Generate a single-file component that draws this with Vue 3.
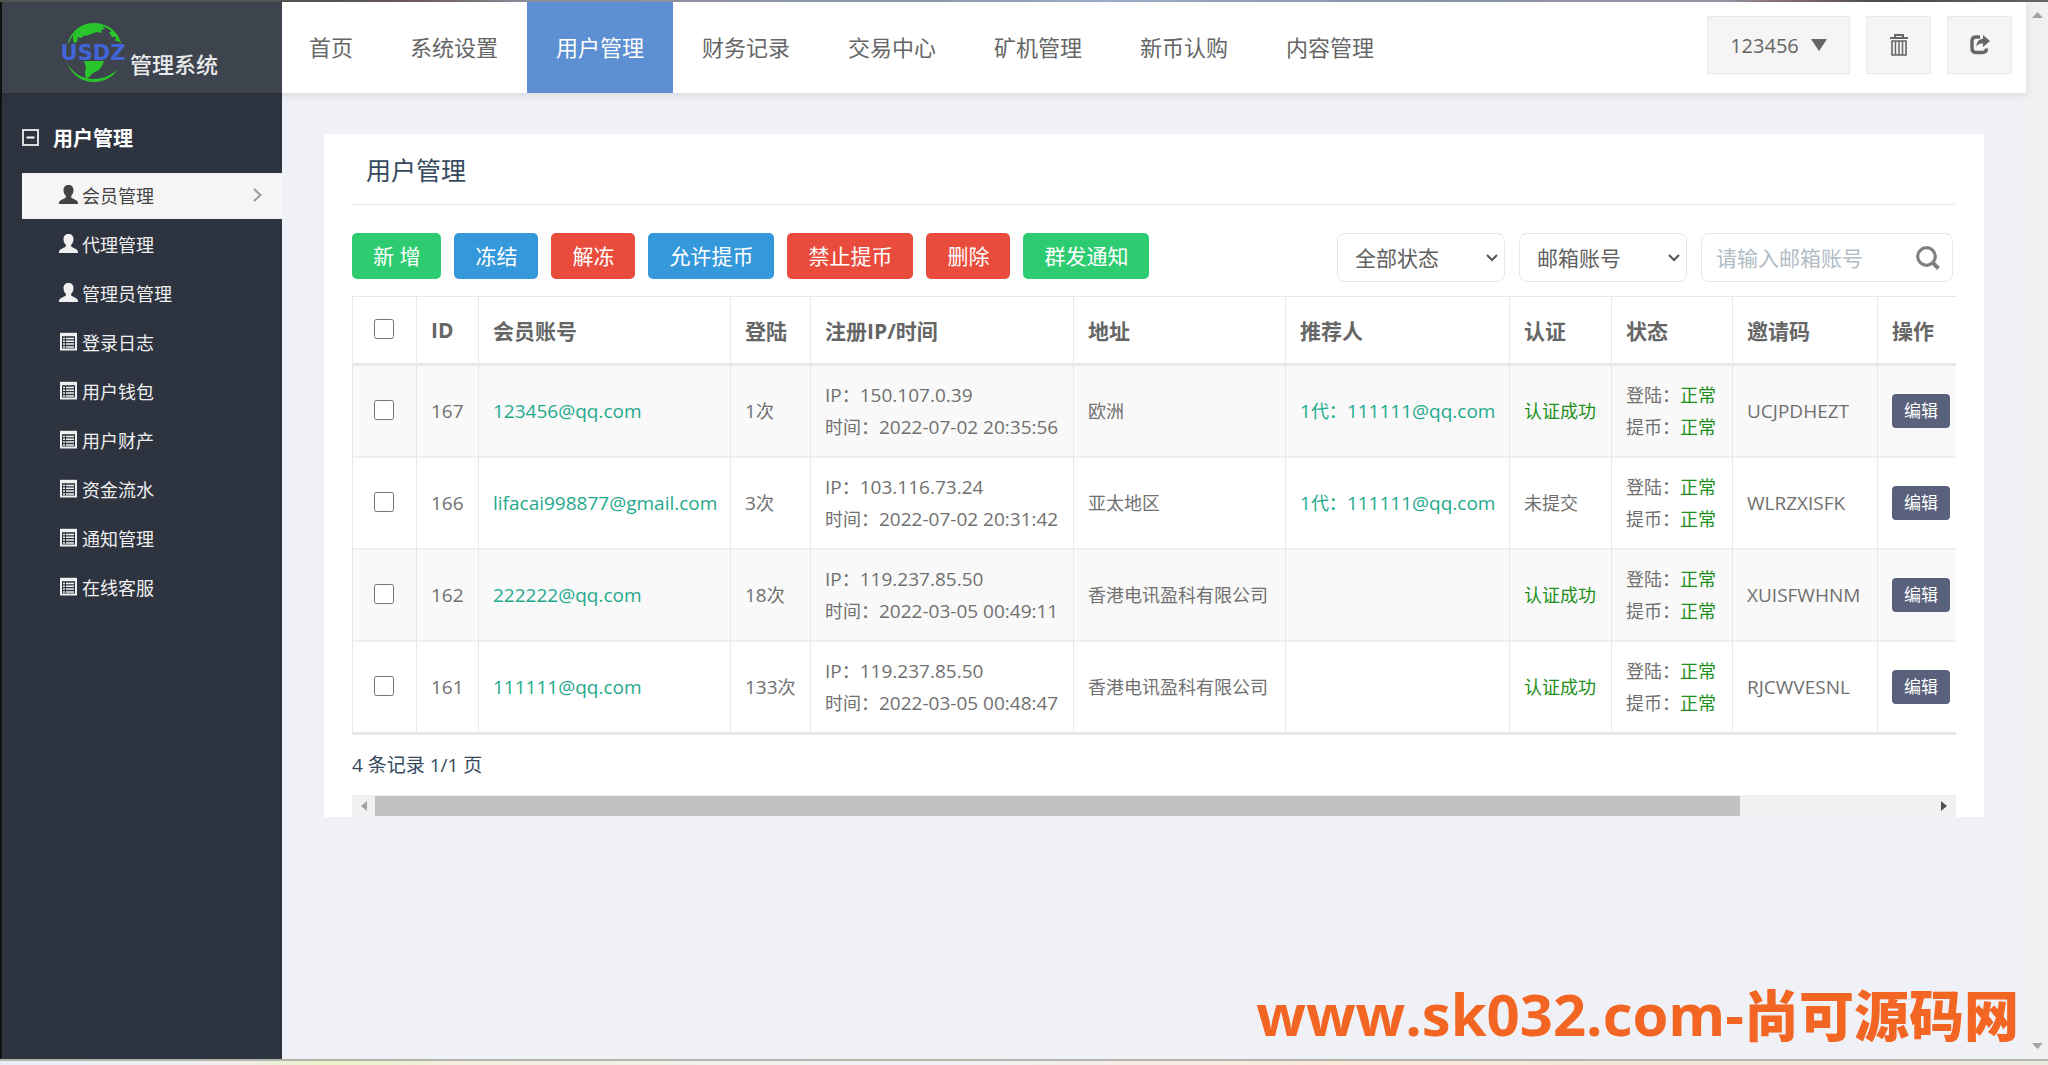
<script setup>
import { ref } from 'vue'

const topNav = ['首页', '系统设置', '用户管理', '财务记录', '交易中心', '矿机管理', '新币认购', '内容管理']
const activeTop = ref('用户管理')

const sideNav = [
  { label: '会员管理', icon: 'user' },
  { label: '代理管理', icon: 'user' },
  { label: '管理员管理', icon: 'user' },
  { label: '登录日志', icon: 'list' },
  { label: '用户钱包', icon: 'list' },
  { label: '用户财产', icon: 'list' },
  { label: '资金流水', icon: 'list' },
  { label: '通知管理', icon: 'list' },
  { label: '在线客服', icon: 'list' },
]
const activeSide = ref('会员管理')

const actions = [
  { label: '新 增', tone: 'green' },
  { label: '冻结', tone: 'blue' },
  { label: '解冻', tone: 'red' },
  { label: '允许提币', tone: 'blue' },
  { label: '禁止提币', tone: 'red' },
  { label: '删除', tone: 'red' },
  { label: '群发通知', tone: 'green' },
]

const columns = ['ID', '会员账号', '登陆', '注册IP/时间', '地址', '推荐人', '认证', '状态', '邀请码', '操作']

const members = [
  { id: 167, account: '123456@qq.com', logins: 1, ip: '150.107.0.39', time: '2022-07-02 20:35:56', place: '欧洲', referrer: '111111@qq.com', verified: true, code: 'UCJPDHEZT' },
  { id: 166, account: 'lifacai998877@gmail.com', logins: 3, ip: '103.116.73.24', time: '2022-07-02 20:31:42', place: '亚太地区', referrer: '111111@qq.com', verified: false, code: 'WLRZXISFK' },
  { id: 162, account: '222222@qq.com', logins: 18, ip: '119.237.85.50', time: '2022-03-05 00:49:11', place: '香港电讯盈科有限公司', referrer: '', verified: true, code: 'XUISFWHNM' },
  { id: 161, account: '111111@qq.com', logins: 133, ip: '119.237.85.50', time: '2022-03-05 00:48:47', place: '香港电讯盈科有限公司', referrer: '', verified: true, code: 'RJCWVESNL' },
]

const keyword = ref('')
</script>

<template>
  <div class="screen">
    <div class="edge-top"></div>
    <div class="app">
      <div class="shell">
        <header class="topbar">
          <div class="brand">
            <svg class="globe" viewBox="0 0 66 62" width="66" height="62" aria-label="USDZ">
              <g fill="#2ac52a">
                <path d="M7 22C10 10 20 2 33 2s24 8 27 20l-1 0C55 11 45 4 33 4S12 11 8 22z" />
                <path d="M12 15l5-7 9-4 9-1 6 2 3 3-4 1 1 3-5-1-6 2-4 2-2-1-4 3-3-1-1 5-3 1-1-4z" />
                <path d="M50 8l6 6 3 7-3-1-2 0 1-4-4 0-3-5 2 0z" />
                <path d="M23 40h20l-2 5-3 4-6 3-4 4-3 2-1-7 1-5z" />
                <path d="M7 43c5 9 14 15 26 15 9 0 18-4 24-10-5 8-14 13-24 13C20 61 10 53 7 43z" />
              </g>
              <text x="32" y="39" text-anchor="middle" fill="#4164d8">USDZ</text>
            </svg>
            <span class="brand-name">管理系统</span>
          </div>
          <nav class="topnav">
            <a v-for="item in topNav" :key="item" href="#" :class="{ active: item === activeTop }" @click.prevent="activeTop = item">{{ item }}</a>
          </nav>
          <div class="tools">
            <button type="button" class="account">123456
              <svg width="16" height="12" viewBox="0 0 16 12"><path d="M0 0h16L8 12z" fill="#666" /></svg>
            </button>
            <button type="button" class="square" aria-label="清除缓存">
              <svg width="18" height="22" viewBox="0 0 18 22" fill="none" stroke="#666" stroke-width="2">
                <path d="M0 4h18M5 4V1h8v3" />
                <path d="M2 7h14v14H2z" stroke-width="1.6" />
                <path d="M5.500 7v14M9 7v14M12.500 7v14" stroke-width="1.500" />
              </svg>
            </button>
            <button type="button" class="square" aria-label="退出">
              <svg width="20" height="20" viewBox="0 0 20 20">
                <path d="M10 2H6C3 2 2 3.500 2 6v7c0 3 1 4.500 4 4.500h6c3 0 4.500-1 4.500-4" fill="none" stroke="#666" stroke-width="3.400" />
                <path d="M13 0l7 6-7 6V8.500c-3 0-5 .5-6.500 3C6.500 6.500 9 4 13 3.700z" fill="#666" />
              </svg>
            </button>
          </div>
        </header>

        <div class="body">
          <aside class="sidebar">
            <div class="group">
              <svg width="17" height="17" viewBox="0 0 17 17"><rect x="1" y="1" width="15" height="15" fill="none" stroke="#dcdde0" stroke-width="2" /><path d="M4.500 8.500h8" stroke="#fff" stroke-width="2" /></svg>
              <span>用户管理</span>
            </div>
            <nav class="sidenav">
              <a v-for="item in sideNav" :key="item.label" href="#" :class="{ active: item.label === activeSide }" @click.prevent="activeSide = item.label">
                <svg v-if="item.icon === 'user'" width="19" height="19" viewBox="0 0 19 19"><path d="M9.500 0C6.500 0 4.500 2 4.500 5c0 2.500 1 4.600 2.300 5.800v1.700C5.500 14 0 15 0 18v1h19v-1c0-3-5.500-4-6.800-5.500v-1.700c1.300-1.200 2.300-3.300 2.300-5.800 0-3-2-5-5-5z" fill="currentColor" /></svg>
                <svg v-else width="19" height="19" viewBox="0 0 19 19" fill="none" stroke="currentColor">
                  <path d="M2 2h15v15.500H2z" stroke-width="2" /><path d="M1 2.500h17" stroke-width="3.400" />
                  <path d="M4 6.500h2M7 6.500h8M4 9.300h2M7 9.300h8M4 12.100h2M7 12.100h8M4 14.900h2M7 14.900h8" stroke-width="1.500" />
                </svg>
                <span>{{ item.label }}</span>
                <svg v-if="item.label === activeSide" width="9" height="14" viewBox="0 0 9 14"><path d="M1 1l6.500 6L1 13" fill="none" stroke="#999" stroke-width="2" /></svg>
              </a>
            </nav>
          </aside>

          <main class="main">
            <section class="card">
              <h1>用户管理</h1>
              <div class="toolbar">
                <div class="actions">
                  <button v-for="a in actions" :key="a.label" type="button" :class="a.tone">{{ a.label }}</button>
                </div>
                <form class="filters" @submit.prevent>
                  <label class="pick">
                    <select aria-label="状态"><option>全部状态</option></select>
                    <svg width="12" height="8" viewBox="0 0 12 8"><path d="M1 1l5 5 5-5" fill="none" stroke="#555" stroke-width="2" /></svg>
                  </label>
                  <label class="pick">
                    <select aria-label="查询方式"><option>邮箱账号</option></select>
                    <svg width="12" height="8" viewBox="0 0 12 8"><path d="M1 1l5 5 5-5" fill="none" stroke="#555" stroke-width="2" /></svg>
                  </label>
                  <div class="search">
                    <input v-model="keyword" type="text" placeholder="请输入邮箱账号" aria-label="邮箱账号">
                    <button type="submit" aria-label="搜索">
                      <svg width="24" height="24" viewBox="0 0 24 24" fill="none" stroke="#808080"><circle cx="10.500" cy="10.500" r="8.800" stroke-width="3.200" /><path d="M16.500 16.500l6 6" stroke-width="4" /></svg>
                    </button>
                  </div>
                </form>
              </div>

              <div class="table-wrap">
                <table>
                  <colgroup>
                    <col class="c-check"><col class="c-id"><col class="c-account"><col class="c-login"><col class="c-ip"><col class="c-place"><col class="c-ref"><col class="c-auth"><col class="c-state"><col class="c-code"><col class="c-op">
                  </colgroup>
                  <thead>
                    <tr>
                      <th class="check"><input type="checkbox" aria-label="全选"></th>
                      <th v-for="c in columns" :key="c">{{ c }}</th>
                    </tr>
                  </thead>
                  <tbody>
                    <tr v-for="m in members" :key="m.id">
                      <td class="check"><input type="checkbox" :aria-label="'选择 ' + m.id"></td>
                      <td><span class="latin">{{ m.id }}</span></td>
                      <td><a href="#" class="latin" @click.prevent>{{ m.account }}</a></td>
                      <td><span class="latin">{{ m.logins }}</span>次</td>
                      <td>
                        <div><span class="latin">IP</span>：<span class="latin">{{ m.ip }}</span></div>
                        <div>时间：<span class="latin">{{ m.time }}</span></div>
                      </td>
                      <td>{{ m.place }}</td>
                      <td><a v-if="m.referrer" href="#" @click.prevent><span class="latin">1</span>代：<span class="latin">{{ m.referrer }}</span></a></td>
                      <td><span :class="{ ok: m.verified }">{{ m.verified ? '认证成功' : '未提交' }}</span></td>
                      <td>
                        <div>登陆：<span class="ok">正常</span></div>
                        <div>提币：<span class="ok">正常</span></div>
                      </td>
                      <td><span class="latin">{{ m.code }}</span></td>
                      <td><button type="button" class="edit">编辑</button></td>
                    </tr>
                  </tbody>
                </table>
              </div>
              <p class="pager">4 条记录 1/1 页</p>
              <div class="hbar">
                <svg width="6" height="10" viewBox="0 0 6 10"><path d="M6 0v10L0 5z" fill="#a3a3a3" /></svg>
                <div class="htrack"><div class="hthumb"></div></div>
                <svg width="6" height="10" viewBox="0 0 6 10"><path d="M0 0v10l6-5z" fill="#505050" /></svg>
              </div>
            </section>
          </main>
        </div>
      </div>
      <div class="vbar">
        <svg width="11" height="6" viewBox="0 0 11 6"><path d="M0 6h11L5.500 0z" fill="#a3a3a3" /></svg>
        <svg width="11" height="6" viewBox="0 0 11 6"><path d="M0 0h11L5.500 6z" fill="#a3a3a3" /></svg>
      </div>
      <div class="watermark"><span>www.sk032.com-</span>尚可源码网</div>
    </div>
    <div class="edge-bottom"></div>
  </div>
</template>

<style>
body {
  margin: 0;
  background: #f0f1f7;
}
</style>

<style scoped>
.screen {
  display: flex;
  flex-direction: column;
  height: 100vh;
  box-sizing: border-box;
  font-family: "Open Sans", "Noto Sans CJK SC", sans-serif;
  font-size: 18px;
  color: #707070;
}
.screen * {
  box-sizing: border-box;
}
button, input, select {
  font-family: inherit;
  margin: 0;
}
a {
  text-decoration: none;
}
svg {
  display: block;
  flex: none;
}
.edge-top {
  height: 2px;
  flex: none;
  background: linear-gradient(90deg, #555 0, #555 16%, #6f5a5e 20%, #8f92a0 26%, #8f9ab0 45%, #a3b0cc 54%, #8a94aa 70%, #9a9aa8 84%, #8a6f7c 87%, #4c4c4c 92%, #666 100%);
}
.edge-bottom {
  height: 6px;
  flex: none;
  border-top: 2px solid #b5b4ac;
  background: linear-gradient(90deg, #e9edf8 0, #eeeeec 11%, #e9f3c6 16%, #f3eede 22%, #eef0f4 45%, #fbe9da 65%, #f4e6d8 82%, #ece9de 100%);
}
.app {
  position: relative;
  display: flex;
  flex: 1;
  min-height: 0;
  border-left: 2px solid #111;
  background: #f0f1f7;
}
.shell {
  flex: 1;
  min-width: 0;
  display: flex;
  flex-direction: column;
}

.topbar {
  position: relative;
  z-index: 1;
  display: flex;
  height: 91px;
  flex: none;
  background: #fff;
  box-shadow: 0 2px 8px rgba(0, 0, 0, 0.1);
}
.brand {
  width: 280px;
  flex: none;
  display: flex;
  align-items: center;
  gap: 3px;
  padding-left: 59px;
  background: #3e444d;
}
.globe {
  margin-top: 9px;
}
.globe text {
  font-family: "DejaVu Sans", sans-serif;
  font-size: 21px;
  font-weight: 700;
}
.brand-name {
  margin-top: 40px;
  height: 44px;
  line-height: 36px;
  font-size: 22px;
  font-weight: 500;
  color: #e8eaec;
}
.topnav {
  display: flex;
  flex: 1;
}
.topnav a {
  padding: 0 29px;
  font-size: 22px;
  line-height: 91px;
  color: #666;
  white-space: nowrap;
}
.topnav a:first-child {
  padding: 0 28px 0 27px;
}
.topnav a.active {
  background: #5c90d2;
  color: #fff;
}
.tools {
  display: flex;
  gap: 16px;
  padding: 14px 14px 0 0;
}
.tools button {
  display: flex;
  align-items: center;
  justify-content: center;
  height: 58px;
  padding: 0;
  border: 1px solid #e9e9e9;
  background: #f5f5f5;
  color: #666;
  font-size: 20px;
}
.tools .account {
  width: 143px;
  gap: 12px;
}
.tools .square {
  width: 65px;
}

.body {
  display: flex;
  flex: 1;
  min-height: 0;
}
.sidebar {
  width: 280px;
  flex: none;
  padding: 28px 0 0 20px;
  background: #2d333f;
  color: #f0f0f0;
}
.group {
  display: flex;
  align-items: center;
  gap: 14px;
  height: 32px;
  margin-bottom: 20px;
  font-size: 20px;
  font-weight: 700;
  color: #fff;
}
.sidenav {
  display: flex;
  flex-direction: column;
  gap: 3px;
}
.sidenav a {
  display: flex;
  align-items: center;
  gap: 4px;
  height: 46px;
  padding: 0 20px 3px 37px;
  color: #f0f0f0;
}
.sidenav a span {
  flex: 1;
}
.sidenav a.active {
  background: #f5f5f5;
  color: #444;
}

.main {
  flex: 1;
  min-width: 0;
  padding: 41px 42px 0;
}
.card {
  padding: 0 28px;
  background: #fff;
}
h1 {
  margin: 0;
  padding: 0 14px;
  height: 71px;
  line-height: 72px;
  border-bottom: 1px solid #e8eaec;
  font-size: 25px;
  font-weight: 400;
  color: #34495e;
}
.toolbar {
  display: flex;
  justify-content: space-between;
  padding: 28px 3px 14px 0;
}
.actions {
  display: flex;
  gap: 13px;
}
.actions button {
  height: 46px;
  padding: 0 21px;
  border: 0;
  border-radius: 5px;
  font-size: 21px;
  line-height: 46px;
  color: #fff;
  white-space: nowrap;
}
.actions .green { background: #2ecc71; }
.actions .blue { background: #3498db; }
.actions .red { background: #e94c3d; }
.filters {
  display: flex;
  gap: 14px;
}
.pick, .search {
  position: relative;
  display: flex;
  align-items: center;
}
.pick svg {
  position: absolute;
  right: 7px;
  pointer-events: none;
}
select, .search input {
  height: 49px;
  border: 1px solid #e6e6e6;
  border-radius: 8px;
  background: #fff;
  color: #606060;
  font-size: 21px;
  outline: 0;
}
select {
  width: 168px;
  padding: 0 0 0 17px;
  appearance: none;
}
.search input {
  width: 252px;
  padding: 0 50px 0 14px;
}
.search input::placeholder {
  color: #b2bcc5;
  opacity: 1;
}
.search button {
  position: absolute;
  right: 13px;
  padding: 0;
  border: 0;
  background: none;
}

.table-wrap {
  overflow: hidden;
}
table {
  width: 1831px;
  table-layout: fixed;
  border-collapse: separate;
  border-spacing: 0;
  border-top: 1px solid #e8e8e8;
  border-bottom: 1px solid #e8e8e8;
}
.c-check { width: 64px; }
.c-id { width: 62px; }
.c-account { width: 252px; }
.c-login { width: 80px; }
.c-ip { width: 263px; }
.c-place { width: 212px; }
.c-ref { width: 224px; }
.c-auth { width: 102px; }
.c-state { width: 121px; }
.c-code { width: 145px; }
.c-op { width: 306px; }
th, td {
  padding: 0 0 0 14px;
  border-left: 1px solid #e8e8e8;
  text-align: left;
  vertical-align: middle;
  white-space: nowrap;
}
th {
  height: 69px;
  border-bottom: 3px solid #e8e8e8;
  font-size: 21px;
  font-weight: 700;
  color: #666;
}
td {
  height: 92px;
  border-bottom: 2px solid #efefef;
  line-height: 32px;
}
tbody tr:nth-child(odd) {
  background: #f9f9f9;
}
tbody tr:last-child td {
  border-bottom-color: #e8e8e8;
}
.check {
  padding: 0 0 3px 21px;
}
.check input {
  display: block;
  width: 20px;
  height: 20px;
}
.latin {
  font-size: 19px;
}
td a {
  color: #1fa98c;
}
.ok {
  color: #1a8f1a;
}
.edit {
  display: block;
  width: 58px;
  height: 34px;
  padding: 0;
  border: 0;
  border-radius: 4px;
  background: #5a617d;
  color: #fff;
  font-size: 17px;
  line-height: 34px;
}
.pager {
  margin: 0;
  height: 60px;
  line-height: 60px;
  font-size: 19px;
  color: #34495e;
}
.hbar {
  display: flex;
  align-items: center;
  gap: 8px;
  height: 22px;
  padding: 0 9px;
  background: #f1f1f1;
}
.htrack {
  flex: 1;
}
.hthumb {
  width: calc(100% * 1604 / 1831);
  height: 20px;
  background: #c1c1c1;
}
.vbar {
  display: flex;
  flex-direction: column;
  align-items: center;
  justify-content: space-between;
  width: 22px;
  flex: none;
  padding: 10px 0;
  background: #f1f1f1;
}
.watermark {
  position: absolute;
  right: 29px;
  bottom: 4px;
  line-height: 80px;
  font-size: 55px;
  font-weight: 900;
  color: #f26522;
  white-space: nowrap;
}
.watermark span {
  font-size: 58px;
  font-weight: 700;
}
</style>
